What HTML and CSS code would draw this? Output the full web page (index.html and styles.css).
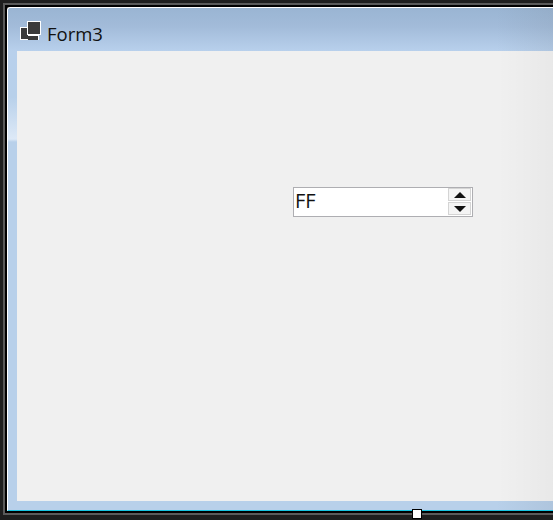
FILE: index.html
```html
<!DOCTYPE html>
<html lang="en">
<head>
<meta charset="utf-8">
<title>Form3</title>
<link rel="stylesheet" href="styles.css">
</head>
<body>
<div class="designer">
  <div class="frame">
    <div class="form">
      <div class="titlebar">
        <svg class="form-icon" width="22" height="20" viewBox="0 0 22 20">
          <rect x="0" y="6" width="9" height="13" fill="#fff"/>
          <rect x="1" y="7" width="7" height="11" fill="#3a3a3a"/>
          <rect x="7" y="0" width="14" height="14" fill="#fff"/>
          <rect x="8" y="1" width="12" height="12" fill="#3a3a3a"/>
          <rect x="8" y="14" width="11" height="5" fill="#fff"/>
          <rect x="8" y="15" width="10" height="4" fill="#3a3a3a"/>
        </svg>
        <span class="title">Form3</span>
      </div>
      <div class="client">
        <div class="numeric">
          <span class="numeric-value">FF</span>
          <div class="spin">
            <div class="spin-btn">
              <svg width="12" height="6" viewBox="0 0 12 6"><path d="M6 0 12 6H0Z" fill="#111"/></svg>
            </div>
            <div class="spin-btn">
              <svg width="12" height="6" viewBox="0 0 12 6"><path d="M0 0H12L6 6Z" fill="#111"/></svg>
            </div>
          </div>
        </div>
      </div>
    </div>
  </div>
  <div class="grip"></div>
</div>
</body>
</html>
```
FILE: styles.css
```css
html, body {
  margin: 0;
  padding: 0;
}

body {
  width: 553px;
  height: 520px;
  overflow: hidden;
  background: #1e1e1e;
}

.designer {
  position: relative;
  box-sizing: border-box;
  width: 553px;
  height: 520px;
  padding: 3px 0 5px 3px;
}

.frame {
  box-sizing: border-box;
  height: 512px;
  width: 560px;
  border: solid #5a5a5a;
  border-width: 2px 0 2px 2px;
  background: #000;
  padding: 2px 0 2px 2px;
}

.form {
  box-sizing: border-box;
  height: 504px;
  display: flex;
  flex-direction: column;
  border-top: 1px solid #fff;
  border-left: 1px solid #fff;
  border-bottom: 1px solid #17c3e0;
  border-top-left-radius: 3px;
  background:
    linear-gradient(to right, rgba(110, 120, 130, 0) 88%, rgba(110, 120, 130, 0.12) 98%),
    linear-gradient(to bottom, #9ab5d3 0, #a2bbd9 18px, #b8d0ec 43px, #b8d0ea 89px, #dde9f7 131px, #b8d0ea 134px);
}

.titlebar {
  flex: none;
  height: 43px;
  display: flex;
  align-items: center;
  gap: 5px;
  padding-left: 12px;
}

.form-icon {
  flex: none;
  margin-top: 3px;
}

.title {
  font-family: "Open Sans", "Noto Sans", sans-serif;
  font-size: 18.500px;
  color: #111;
  margin-top: 7px;
}

.client {
  flex: 1;
  margin: 0 0 9px 9px;
  padding: 136px 0 0 276px;
  background:
    linear-gradient(to right, rgba(0, 0, 0, 0) 88%, rgba(0, 0, 0, 0.03) 98%),
    #f0f0f0;
}

.numeric {
  box-sizing: border-box;
  width: 180px;
  height: 30px;
  display: flex;
  align-items: center;
  justify-content: space-between;
  border: 1px solid #aeaeb2;
  background: #fff;
  padding-left: 1px;
}

.numeric-value {
  font-family: "Open Sans", "Noto Sans", sans-serif;
  font-size: 20px;
  color: #111;
  margin-top: -4px;
}

.spin {
  width: 23px;
  align-self: stretch;
  display: flex;
  flex-direction: column;
  gap: 1px;
  padding: 0 1px 1px 0;
}

.spin-btn {
  flex: 1;
  display: flex;
  align-items: center;
  justify-content: center;
  border: 1px solid #d4d4d4;
  background: #f4f4f4;
}

.grip {
  position: absolute;
  left: 412px;
  top: 509px;
  box-sizing: border-box;
  width: 10px;
  height: 10px;
  border: 1px solid #000;
  background: #fff;
}
```
